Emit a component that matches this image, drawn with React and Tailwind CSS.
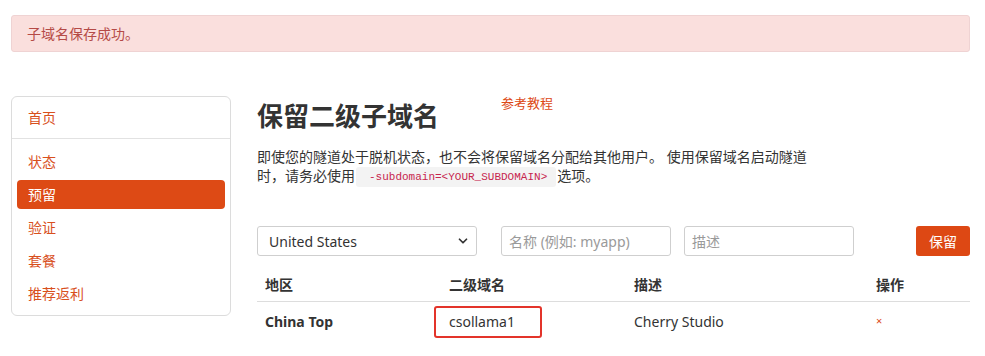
import { ChevronDown } from "lucide-react"

const font = { fontFamily: '"Noto Sans", "Noto Sans CJK SC", sans-serif' }

export default function App() {
    const nav = ["状态", "预留", "验证", "套餐", "推荐返利"]
    const rows = [{ region: "China Top", sub: "csollama1", desc: "Cherry Studio" }]

    return (
        <div className="w-[985px] h-[356px] overflow-hidden bg-white px-[11px] pt-[15px] text-[14px] text-[#333]" style={font}>
            {/* ALERT */}
            <div className="w-[959px] h-[37px] flex items-center px-[15px] rounded-[3px] border border-[#efd3d3] bg-[#fadfdd] text-[#b54a46] text-[14px]">
                子域名保存成功。
            </div>

            <div className="flex mt-[44px] w-[959px]">
                {/* SIDEBAR */}
                <div className="w-[220px] h-[220px] shrink-0 border border-[#dcdcdc] rounded-[6px] flex flex-col">
                    <div className="h-[42px] flex items-center pl-[16px] text-[#d8501d] border-b border-[#e2e2e2]">首页</div>
                    <div className="flex flex-col pt-[6px] px-[5px]">
                        {nav.map(n => (
                            <div key={n} className="h-[33px] py-[2px]">
                                <div className={n === "预留"
                                    ? "h-full flex items-center pl-[11px] rounded-[4px] bg-[#dd4a15] text-white"
                                    : "h-full flex items-center pl-[11px] text-[#d8501d]"}>
                                    {n}
                                </div>
                            </div>
                        ))}
                    </div>
                </div>

                {/* MAIN */}
                <div className="ml-[26px] flex-1">
                    <div className="flex items-start h-[40px] pt-[2px]">
                        <h1 className="text-[26px] font-bold leading-[36px] text-[#333]">保留二级子域名</h1>
                        <a className="ml-[62px] mt-[-4px] text-[13px] text-[#dd4814]">参考教程</a>
                    </div>
                    <p className="mt-[11px] leading-[19px]">
                        即使您的隧道处于脱机状态，也不会将保留域名分配给其他用户。 使用保留域名启动隧道<br />
                        时，请务必使用<code className="inline-block h-[20px] leading-[20px] align-middle mx-[1px] pl-[13px] pr-[9px] rounded-[3px] bg-[#f3f3f3] text-[#c7254e] text-[11px]" style={{ fontFamily: '"Liberation Mono", monospace' }}>-subdomain=&lt;YOUR_SUBDOMAIN&gt;</code>选项。
                    </p>

                    {/* FORM */}
                    <div className="flex items-center mt-[39px] h-[30px]">
                        <div className="w-[220px] h-[30px] border border-[#cfcfcf] rounded-[3px] flex items-center justify-between pl-[11px] pr-[6px]">
                            <span>United States</span>
                            <ChevronDown size={14} strokeWidth={3} className="text-[#333]" />
                        </div>
                        <div className="ml-[24px] w-[170px] h-[30px] border border-[#cfcfcf] rounded-[3px] flex items-center px-[7px] text-[#9a9a9a]">名称 (例如: myapp)</div>
                        <div className="ml-[13px] w-[170px] h-[30px] border border-[#cfcfcf] rounded-[3px] flex items-center px-[7px] text-[#9a9a9a]">描述</div>
                        <button className="ml-auto w-[54px] h-[30px] rounded-[3px] bg-[#dd4814] text-white">保留</button>
                    </div>

                    {/* TABLE */}
                    <div className="mt-[12px]">
                        <div className="flex h-[34px] items-center border-b border-[#ddd] font-bold">
                            <div className="w-[184px] pl-[8px]">地区</div>
                            <div className="w-[185px] pl-[8px]">二级域名</div>
                            <div className="w-[242px] pl-[8px]">描述</div>
                            <div className="flex-1 pl-[8px]">操作</div>
                        </div>
                        {rows.map(r => (
                            <div key={r.sub} className="flex h-[38px] items-center">
                                <div className="w-[184px] pl-[8px] font-bold">{r.region}</div>
                                <div className="w-[185px] pl-[8px] relative">
                                    {r.sub}
                                    <span className="absolute left-[-7px] top-[-5px] w-[108px] h-[32px] border-2 border-[#e3342a] rounded-[3px]" />
                                </div>
                                <div className="w-[242px] pl-[8px]">{r.desc}</div>
                                <div className="flex-1 pl-[8px] text-[11px] text-[#dd4814]">×</div>
                            </div>
                        ))}
                    </div>
                </div>
            </div>
        </div>
    )
}
